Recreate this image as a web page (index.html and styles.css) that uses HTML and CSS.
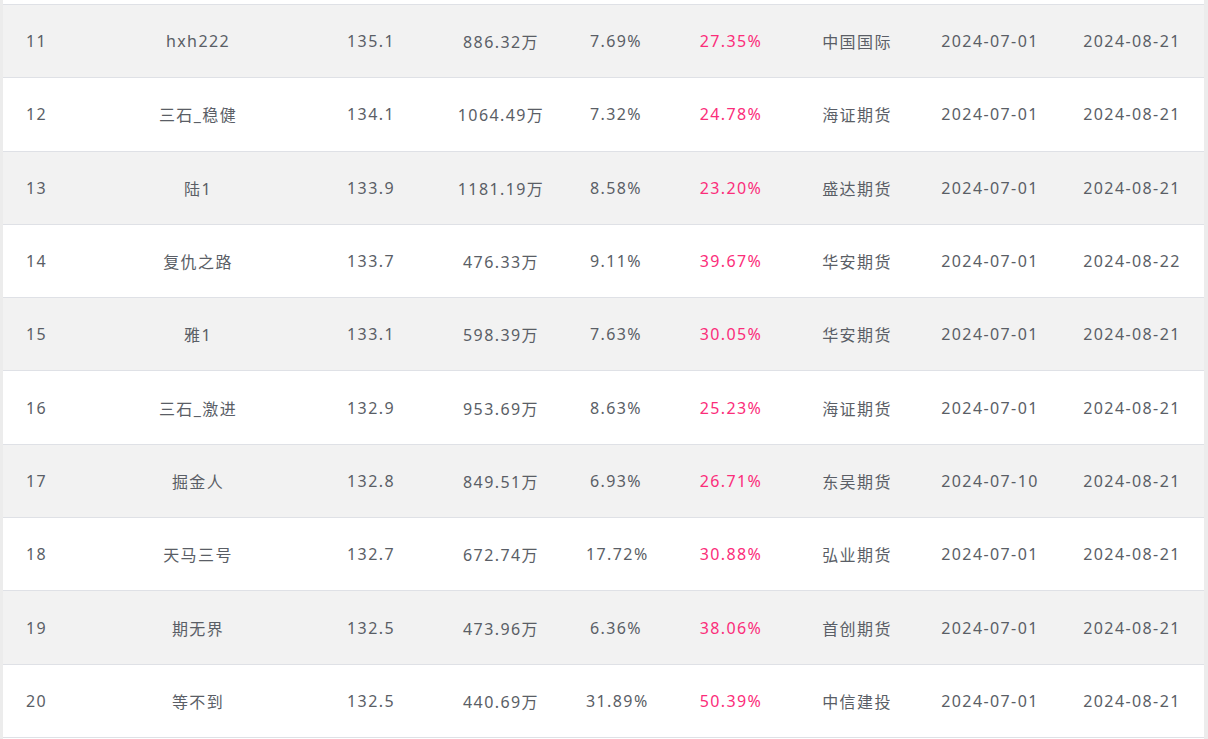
FILE: index.html
```html
<!DOCTYPE html>
<html lang="zh">
<head>
<meta charset="utf-8">
<link rel="stylesheet" href="styles.css">
</head>
<body>
<div class="frame">
  <div class="table">
    <div class="row stripe"><span>11</span><span>hxh222</span><span>135.1</span><span>886.32万</span><span>7.69%</span><span class="pink">27.35%</span><span>中国国际</span><span>2024-07-01</span><span>2024-08-21</span><span></span></div>
    <div class="row"><span>12</span><span>三石_稳健</span><span>134.1</span><span>1064.49万</span><span>7.32%</span><span class="pink">24.78%</span><span>海证期货</span><span>2024-07-01</span><span>2024-08-21</span><span></span></div>
    <div class="row stripe"><span>13</span><span>陆1</span><span>133.9</span><span>1181.19万</span><span>8.58%</span><span class="pink">23.20%</span><span>盛达期货</span><span>2024-07-01</span><span>2024-08-21</span><span></span></div>
    <div class="row"><span>14</span><span>复仇之路</span><span>133.7</span><span>476.33万</span><span>9.11%</span><span class="pink">39.67%</span><span>华安期货</span><span>2024-07-01</span><span>2024-08-22</span><span></span></div>
    <div class="row stripe"><span>15</span><span>雅1</span><span>133.1</span><span>598.39万</span><span>7.63%</span><span class="pink">30.05%</span><span>华安期货</span><span>2024-07-01</span><span>2024-08-21</span><span></span></div>
    <div class="row"><span>16</span><span>三石_激进</span><span>132.9</span><span>953.69万</span><span>8.63%</span><span class="pink">25.23%</span><span>海证期货</span><span>2024-07-01</span><span>2024-08-21</span><span></span></div>
    <div class="row stripe"><span>17</span><span>掘金人</span><span>132.8</span><span>849.51万</span><span>6.93%</span><span class="pink">26.71%</span><span>东吴期货</span><span>2024-07-10</span><span>2024-08-21</span><span></span></div>
    <div class="row"><span>18</span><span>天马三号</span><span>132.7</span><span>672.74万</span><span>17.72%</span><span class="pink">30.88%</span><span>弘业期货</span><span>2024-07-01</span><span>2024-08-21</span><span></span></div>
    <div class="row stripe"><span>19</span><span>期无界</span><span>132.5</span><span>473.96万</span><span>6.36%</span><span class="pink">38.06%</span><span>首创期货</span><span>2024-07-01</span><span>2024-08-21</span><span></span></div>
    <div class="row"><span>20</span><span>等不到</span><span>132.5</span><span>440.69万</span><span>31.89%</span><span class="pink">50.39%</span><span>中信建投</span><span>2024-07-01</span><span>2024-08-21</span><span></span></div>
  </div>
</div>
</body>
</html>
```
FILE: styles.css
```css
html, body {
  margin: 0;
  padding: 0;
  background: #ececec;
}
.frame {
  width: 1201px;
  margin-left: 3px;
  height: 739px;
  background: #ffffff;
  padding-top: 4px;
  box-sizing: border-box;
  font-family: "Noto Sans", "Noto Sans CJK SC", sans-serif;
  font-size: 16px;
  color: #5a5e66;
  letter-spacing: 1.4px;
}
.table {
  border-top: 1px solid #dfe1e6;
}
.row {
  display: grid;
  grid-template-columns: 67px 256px 90px 170px 60px 170px 82px 184px 100px 1fr;
  height: 73.3px;
  box-sizing: border-box;
  border-bottom: 1px solid #dfe1e6;
  align-items: center;
  background: #ffffff;
}
.row.stripe {
  background: #f2f2f2;
}
.row span {
  text-align: center;
  white-space: nowrap;
}
.pink {
  color: #fb2d7a;
}
```
